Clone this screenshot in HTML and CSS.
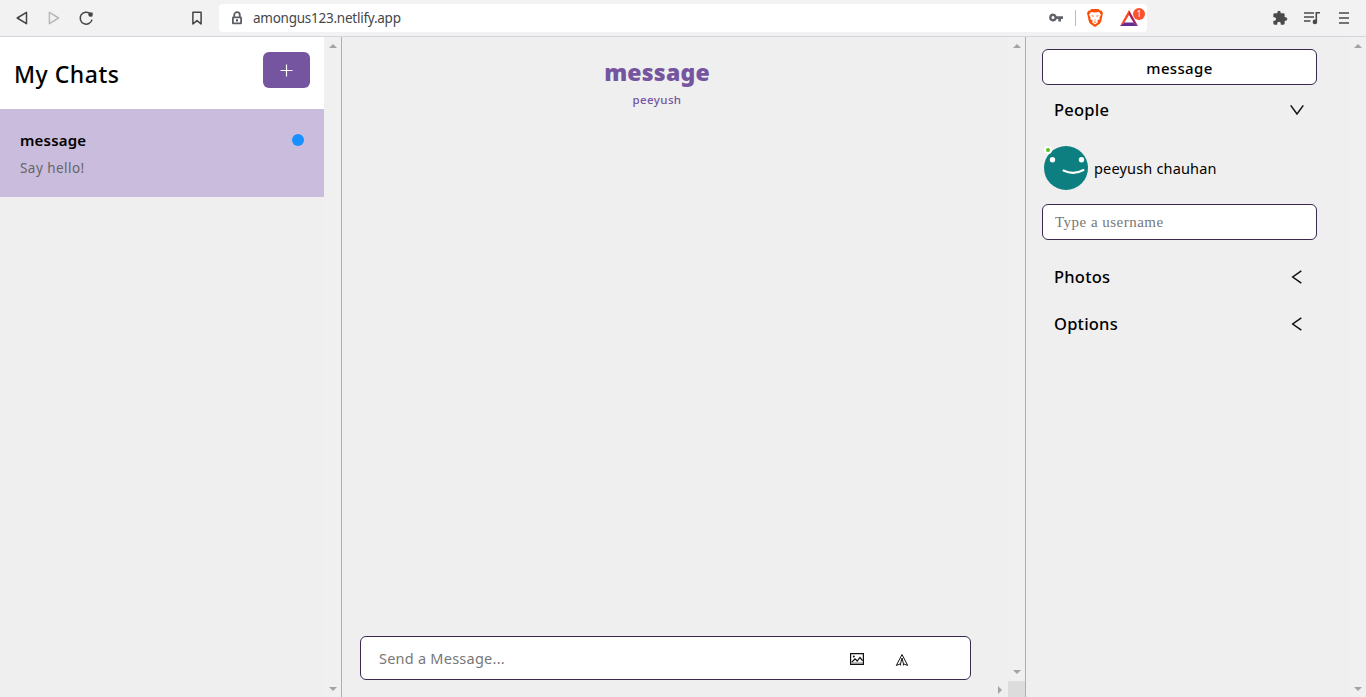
FILE: index.html
```html
<!DOCTYPE html>
<html lang="en">
<head>
<meta charset="utf-8">
<title>My Chats</title>
<link rel="stylesheet" href="styles.css">
</head>
<body>
<header class="toolbar">
  <div class="nav">
    <svg width="16" height="16" viewBox="0 0 16 16" class="line"><path d="M12.500 2.300V13.700L3.200 8Z"/></svg>
    <svg width="16" height="16" viewBox="0 0 16 16" class="line muted"><path d="M3.400 2.300V13.700L12.600 8Z"/></svg>
    <svg width="16" height="16" viewBox="0 0 16 16" class="line"><path d="M12.200 3.700A6 6 0 1 0 14 9.600"/><circle cx="12.400" cy="4.400" r="2.100" class="solid"/><path d="M14.500 2V6.500H11Z" class="solid"/></svg>
  </div>
  <svg class="line bookmark" width="16" height="16" viewBox="0 0 16 16"><path d="M3.900 2.200H12.100V14L8 10.600L3.900 14Z"/></svg>
  <div class="address">
    <svg width="12" height="14" viewBox="0 0 12 14" class="lock"><path d="M3.200 6V4a2.800 2.800 0 0 1 5.600 0V6"/><rect x="1.900" y="6.400" width="8.200" height="6" rx=".5"/><rect x="5" y="8.400" width="2" height="2" class="solid"/></svg>
    <span class="url">amongus123.netlify.app</span>
    <svg class="key" width="16" height="12" viewBox="0 0 16 12"><path fill="#5f6368" fill-rule="evenodd" d="M5 1.500a4 4 0 1 0 3.800 5.600H10.300V9.500H13V7.100H15V4.200H8.700A4 4 0 0 0 5 1.500ZM5 4a1.500 1.500 0 1 1 0 3a1.500 1.500 0 0 1 0-3Z"/></svg>
    <i class="divider"></i>
    <svg class="lion" width="16" height="18" viewBox="0 0 16 18"><path fill="#fb5008" d="M4.400 0H11.600L13 1.500L14.800 1.800L16 4.200L15.500 6L14.200 12.500L12.800 14.800L8 18L3.200 14.800L1.800 12.500L.5 6L0 4.200L1.200 1.800L3 1.500Z"/><path fill="#fff" d="M4 3L8 3.600L12 3L14 5.700L12.400 8.500L12.800 10L10.200 11.700L11 13.300L8 15.600L5 13.300L5.800 11.700L3.200 10L3.600 8.500L2 5.700Z"/><path fill="#fb5413" d="M4.400 6.200L6.800 6.800L6.300 7.700L4.900 7.200ZM11.600 6.200L9.200 6.800L9.700 7.700L11.100 7.200ZM6.600 10.400L8 11L9.400 10.400L8 11.800ZM6.400 13.200L8 12.600L9.600 13.200L8 13.800Z"/></svg>
    <div class="rewards">
      <svg width="18" height="16" viewBox="0 0 18 16"><path fill="#ff4724" d="M9 0V5L4.500 12.500L0 16Z"/><path fill="#9e1f63" d="M9 0L18 16L13.500 12.500L9 5Z"/><path fill="#662d91" d="M0 16L4.500 12.500H13.500L18 16Z"/></svg>
      <b class="badge">1</b>
    </div>
  </div>
  <div class="tools">
    <svg width="16" height="16" viewBox="0 0 24 24"><path fill="#4a4a4a" d="M20.500 11H19V7a2 2 0 0 0-2-2h-4V3.500a2.500 2.500 0 0 0-5 0V5H4a2 2 0 0 0-2 2v3.800h1.500a2.700 2.700 0 0 1 0 5.400H2V20a2 2 0 0 0 2 2h3.800v-1.500a2.700 2.700 0 0 1 5.400 0V22H17a2 2 0 0 0 2-2v-4h1.500a2.500 2.500 0 0 0 0-5Z"/></svg>
    <svg width="16" height="16" viewBox="0 0 16 16"><path class="bars" d="M0 3H10M0 7H10M0 11H6.500M12.300 11.500V2.800H16"/><circle cx="10.900" cy="11.900" r="2.300" fill="#4a4a4a"/></svg>
    <svg width="16" height="16" viewBox="0 0 16 16"><path class="bars" d="M3 3H13M3 8H13M3 13H13"/></svg>
  </div>
</header>
<main class="app">
  <aside class="chats">
    <div class="chat-list">
      <div class="chats-head">
        <h1>My Chats</h1>
        <button class="new-chat"><svg width="13" height="13" viewBox="0 0 13 13"><path d="M6.500 .5V12.500M.5 6.500H12.500" stroke="#fff" stroke-width="1.200"/></svg></button>
      </div>
      <div class="chat-card">
        <div><div class="chat-name">message</div><div class="chat-last">Say hello!</div></div>
        <i class="unread"></i>
      </div>
    </div>
    <div class="scroll"><i class="up"></i><i class="down"></i></div>
  </aside>
  <section class="feed">
    <div class="feed-main">
      <div class="feed-head">
        <h2>message</h2>
        <p>peeyush</p>
      </div>
      <form class="composer">
        <input type="text" placeholder="Send a Message...">
        <svg class="picture" width="14" height="12" viewBox="0 0 14 12"><path fill="none" stroke="#111" stroke-width="1.200" d="M.6 .6H13.400V11.400H.6ZM2 9L5 5.800L7.200 8L10 4.500L12.500 7.600"/><path stroke="#777" stroke-width="1" d="M1.200 10H12.800"/><circle cx="3.800" cy="3.500" r="1" fill="#111"/></svg>
        <svg class="send" width="14" height="14" viewBox="0 0 14 14"><path fill="none" stroke="#111" stroke-width="1" d="M7 1.500L1.300 12.500L5.600 10.700L7 5L8.400 10.700L12.700 12.500ZM5.600 10.700V12.500M8.400 10.700V12.500"/></svg>
      </form>
      <i class="right"></i>
    </div>
    <div class="scroll with-corner"><i class="up"></i><i class="down"></i><i class="corner"></i></div>
  </section>
  <aside class="settings">
    <div class="settings-main">
      <div class="field title-field">message</div>
      <div class="section people"><span>People</span><svg width="16" height="16" viewBox="0 0 16 16"><path d="M1.700 3.400L8 12L14.300 3.400"/></svg></div>
      <div class="person">
        <div class="avatar"><svg width="44" height="44" viewBox="0 0 44 44"><circle cx="22" cy="22" r="22" fill="#0d7f80"/><circle cx="8.500" cy="13.700" r="2.700" fill="#fff"/><circle cx="37.500" cy="13.700" r="2.700" fill="#fff"/><path d="M19.500 24.500Q29.500 29.500 39.500 24" fill="none" stroke="#fff" stroke-width="2" stroke-linecap="round"/></svg><i class="online"></i></div>
        <span>peeyush chauhan</span>
      </div>
      <input class="field username" type="text" placeholder="Type a username">
      <div class="section photos"><span>Photos</span><svg width="16" height="16" viewBox="0 0 16 16"><path d="M12.300 1.800L3.700 8L12.300 14.200"/></svg></div>
      <div class="section options"><span>Options</span><svg width="16" height="16" viewBox="0 0 16 16"><path d="M12.300 1.800L3.700 8L12.300 14.200"/></svg></div>
    </div>
    <div class="scroll"><i class="up"></i><i class="down"></i></div>
  </aside>
</main>
</body>
</html>
```

FILE: styles.css
```css
* { box-sizing: border-box; }
body {
  margin: 0;
  height: 697px;
  display: flex;
  flex-direction: column;
  overflow: hidden;
  background: #efefef;
  color: #000;
  font-family: "Noto Sans", "Open Sans", sans-serif;
}
h1, h2, p { margin: 0; }
svg { display: block; flex: none; }
input { font-family: inherit; outline: none; }

.toolbar {
  display: flex;
  align-items: center;
  height: 37px;
  flex: none;
  padding: 0 14px;
  background: #f2f2f2;
  border-bottom: 1px solid #d3d6dc;
}
.nav { display: flex; gap: 16px; }
.line { fill: none; stroke: #444; stroke-width: 1.5; stroke-linejoin: round; }
.line.muted { stroke: #b9b9b9; }
.solid { fill: #444; stroke: none; }
.lock { fill: none; stroke: #5a5d61; stroke-width: 1.8; }
.bookmark { margin-left: 95px; }
.address {
  display: flex;
  align-items: center;
  width: 928px;
  height: 28px;
  margin-left: 14px;
  padding-left: 12px;
  background: #fff;
  border-radius: 4px;
}
.url { flex: 1; padding: 0 0 1px 10px; font-size: 13.5px; letter-spacing: -0.25px; color: #44474b; }
.key { margin-right: 11px; }
.divider { width: 1px; height: 16px; background: #bbb; }
.lion { margin-left: 11px; }
.rewards { position: relative; margin: 0 9px 0 17px; }
.badge {
  position: absolute;
  left: 13px;
  top: -2px;
  width: 12px;
  height: 12px;
  border-radius: 50%;
  background: #fb542b;
  color: #fff;
  font-size: 8px;
  font-weight: 400;
  line-height: 12px;
  text-align: center;
}
.tools { display: flex; gap: 16px; margin-left: auto; }
.bars { fill: none; stroke: #4a4a4a; stroke-width: 1.6; }

.app { display: flex; flex: 1; min-height: 0; }
.chats { display: flex; width: 342px; border-right: 1px solid #afafaf; }
.chat-list { flex: 1; }
.chats-head {
  display: flex;
  justify-content: space-between;
  height: 72px;
  padding: 15px 14px 0;
  background: #fff;
}
.chats-head h1 { padding-top: 6px; font-size: 23px; line-height: 33px; font-weight: 500; letter-spacing: 0.5px; }
.new-chat {
  display: grid;
  place-items: center;
  width: 47px;
  height: 36px;
  padding: 0;
  border: 0;
  border-radius: 6px;
  background: #7554a0;
}
.chat-card {
  display: flex;
  justify-content: space-between;
  height: 88px;
  padding: 19px 20px 0;
  background: #cabcdc;
}
.chat-name { font-size: 15px; line-height: 24px; font-weight: 600; letter-spacing: 0.2px; }
.chat-last { margin-top: 5px; font-size: 13.5px; line-height: 22px; letter-spacing: 0.45px; color: #666; }
.unread { width: 12px; height: 12px; margin-top: 6px; border-radius: 50%; background: #1890ff; }

.scroll {
  display: flex;
  flex-direction: column;
  justify-content: space-between;
  align-items: center;
  width: 17px;
  padding: 7px 0 6px;
  background: #f0f0f0;
}
.up, .down { border: 4px solid transparent; border-top: 0; border-bottom: 4px solid #a3a3a3; }
.down { border-top: 4px solid #a3a3a3; border-bottom: 0; }
.with-corner { padding-bottom: 0; }
.with-corner .down { margin: auto 0 7px; }
.corner { width: 17px; height: 16px; background: #dcdcdc; }

.feed { display: flex; flex: 1; border-right: 1px solid #afafaf; }
.feed-main { display: flex; flex-direction: column; flex: 1; padding: 19px 6px 3px 18px; }
.feed-head { width: 612px; margin-left: -9px; text-align: center; color: #7554a0; }
.feed-head h2 { font-size: 23px; line-height: 32px; font-weight: 900; letter-spacing: 0.2px; }
.feed-head p { padding-top: 1px; font-size: 11.5px; line-height: 22px; font-weight: 500; letter-spacing: 0.4px; }
.composer {
  display: flex;
  align-items: center;
  width: 611px;
  height: 44px;
  margin-top: auto;
  padding: 0 61px 0 18px;
  border: 1px solid #3b2a50;
  border-radius: 6px;
  background: #fff;
}
.composer input { flex: 1; padding: 0; border: 0; font-size: 14.5px; letter-spacing: 0.24px; }
.composer input::placeholder { color: #777; }
.picture { margin: 2px 31px 0 0; }
.send { margin-top: 3px; }
.right { align-self: flex-end; margin-top: 6px; border: 4px solid transparent; border-right: 0; border-left: 4px solid #a3a3a3; }

.settings { display: flex; width: 340px; }
.settings-main { flex: 1; display: flex; flex-direction: column; padding: 12px 32px 0 16px; }
.field {
  flex: none;
  width: 275px;
  height: 36px;
  border: 1px solid #3b2a50;
  border-radius: 6px;
  background: #fff;
}
.title-field { text-align: center; font-size: 15px; line-height: 37px; font-weight: 500; letter-spacing: 0.35px; }
.section {
  display: flex;
  flex: none;
  align-items: center;
  justify-content: space-between;
  height: 24px;
  padding: 0 12px;
  font-size: 16.5px;
  font-weight: 500;
  letter-spacing: 0.22px;
}
.section span { padding-bottom: 2px; }
.section path { fill: none; stroke: #111; stroke-width: 1.5; }
.people { margin-top: 13px; }
.person { display: flex; flex: none; align-items: center; gap: 6px; margin: 24px 0 14px 2px; font-size: 14.5px; letter-spacing: 0.17px; }
.avatar { position: relative; }
.online {
  position: absolute;
  left: 0;
  top: 0;
  width: 8px;
  height: 8px;
  border: 2px solid #fff;
  border-radius: 50%;
  background: #52c41a;
}
.username { padding: 0 12px; font: 15px "Liberation Serif", serif; letter-spacing: 0.48px; }
.username::placeholder { color: #777; }
.photos { margin-top: 25px; }
.options { margin-top: 23px; }
```
